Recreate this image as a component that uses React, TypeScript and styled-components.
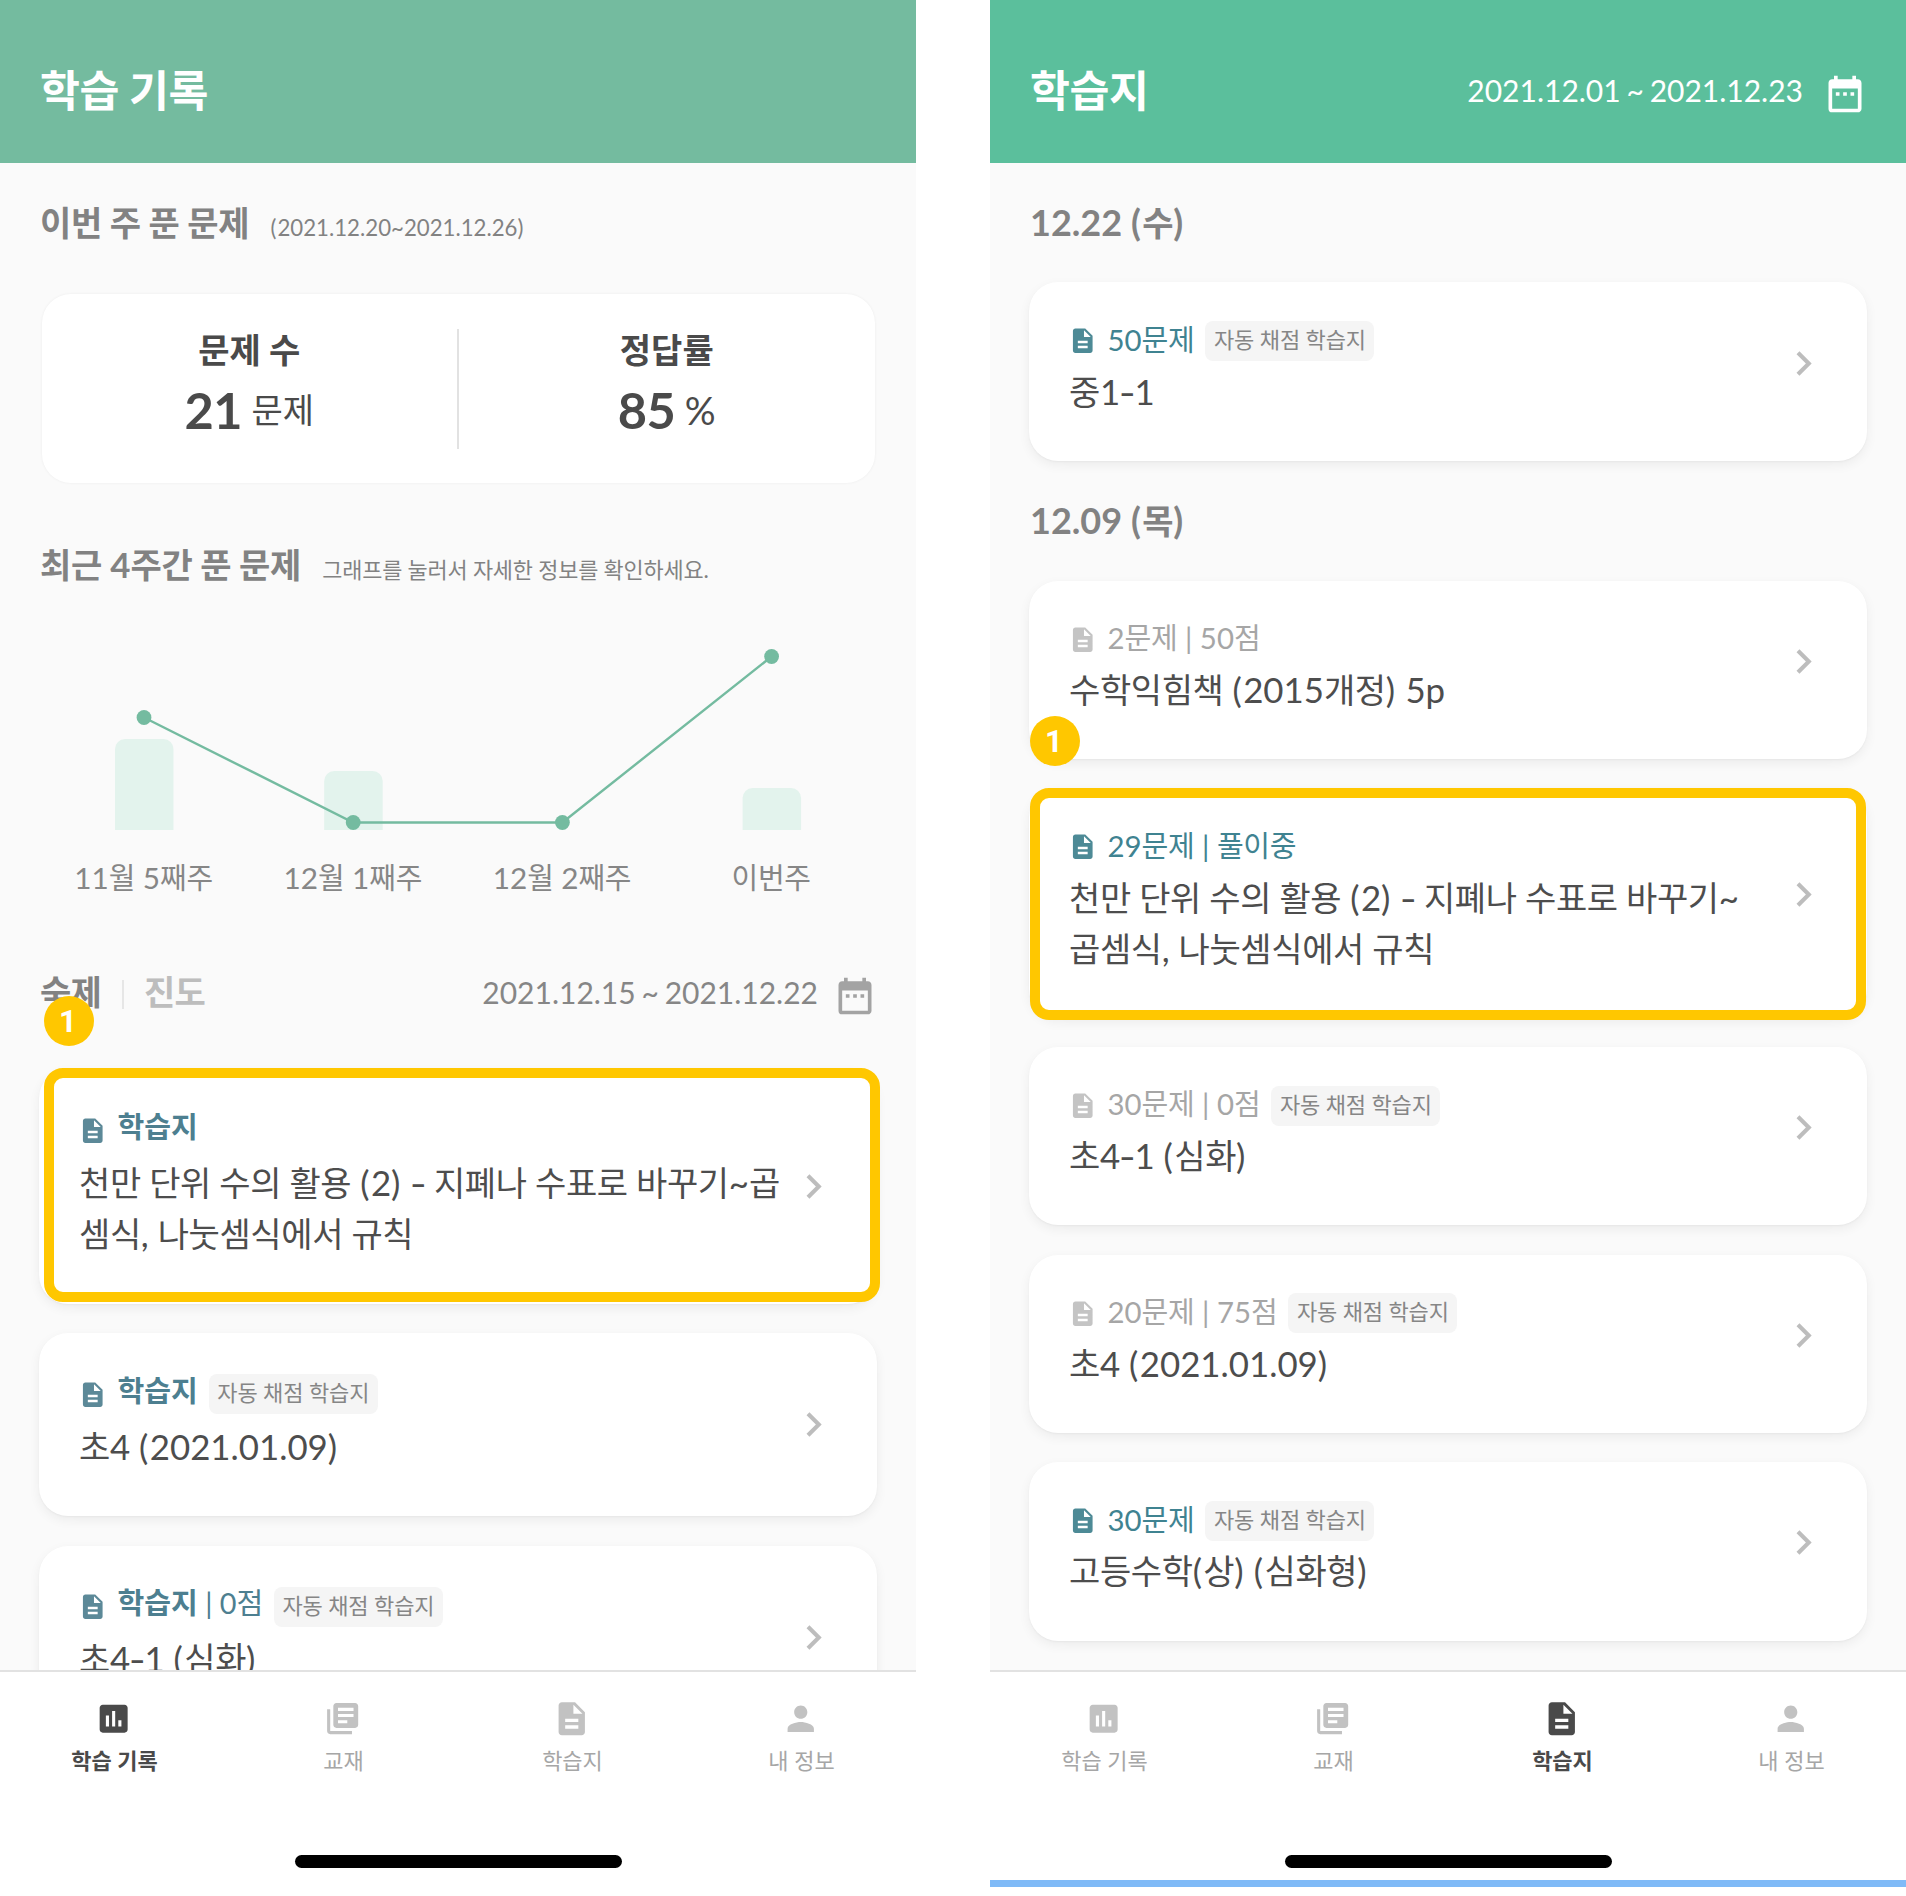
import React from 'react';
import styled, { createGlobalStyle } from 'styled-components';
import { MdDateRange, MdDescription, MdChevronRight, MdInsertChart, MdLibraryBooks, MdPerson } from 'react-icons/md';

const GlobalStyle = createGlobalStyle`
  *, *::before, *::after { box-sizing: border-box; }
  body { margin: 0; background: #fff; }
`;

const Page = styled.div`
  width: 1906px;
  height: 1896px;
  display: flex;
  justify-content: space-between;
  background: #fff;
  overflow: hidden;
  font-family: Lato, 'Noto Sans CJK KR', sans-serif;
`;

const Phone = styled.section`
  width: 916px;
  height: 1896px;
  display: flex;
  flex-direction: column;
  background: #fafafa;
`;

const Hangul = styled.span<{ $tight?: number }>`
  letter-spacing: ${(p) => -(p.$tight ?? 0.011)}em;
`;

const Latin = styled.span<{ $scale: number }>`
  font-size: ${(p) => p.$scale}em;
  font-kerning: none;
`;

const Paren = styled(Latin)`
  letter-spacing: 0.04em;
`;

const Hyphen = styled.span`
  display: inline-block;
  margin: 0 0.025em;
  transform: scaleX(1.35);
`;

/* Hangul is set slightly tighter and Latin slightly larger within one line. */
const Mixed = ({ text, scale = 1.025, tight }: { text: string; scale?: number; tight?: number }) => (
  <>
    {text.split(/([가-힣]+(?: [가-힣]+)*|-|[()])/).filter(Boolean).map((run, i) => {
      if (run === '-') return <Hyphen key={i}>-</Hyphen>;
      if (run === '(' || run === ')') return <Paren key={i} $scale={scale}>{run}</Paren>;
      if (/[가-힣]/.test(run)) return <Hangul key={i} $tight={tight}>{run}</Hangul>;
      return <Latin key={i} $scale={scale}>{run}</Latin>;
    })}
  </>
);

const Header = styled.header<{ $color: string }>`
  flex: none;
  height: 163px;
  padding: 16.5px 39.5px 0 40px;
  display: flex;
  align-items: center;
  justify-content: space-between;
  background: ${(p) => p.$color};
  color: #fff;
`;

const Title = styled.h1`
  margin: 0;
  font-size: 43.4px;
  line-height: 60px;
  font-weight: 700;
`;

const DateRange = styled.div<{ $color: string; $gap: number }>`
  display: flex;
  align-items: center;
  gap: ${(p) => p.$gap}px;
  color: ${(p) => p.$color};
  font-size: 30px;
  line-height: 44px;
  word-spacing: -1.9px;
  white-space: nowrap;
  svg { display: block; margin-top: 8px; }
`;

const Body = styled.main<{ $pad: number }>`
  flex: none;
  height: 1507px;
  overflow: hidden;
  padding: ${(p) => p.$pad}px 39px 0;
`;

const Heading = styled.div<{ $mt?: number; $mb: number }>`
  display: flex;
  align-items: baseline;
  gap: 21.5px;
  height: 50px;
  margin: ${(p) => p.$mt ?? 0}px 0 ${(p) => p.$mb}px 1px;
  white-space: nowrap;
  color: #828282;
`;

const HeadingText = styled.h2`
  margin: 0;
  font-size: 34px;
  line-height: 50px;
  font-weight: 700;
`;

const Hint = styled.span`
  font-size: 21.9px;
`;

const StatCard = styled.div`
  height: 189px;
  margin: 0 2.5px;
  padding: 35px 0 34px;
  display: flex;
  align-items: stretch;
  background: #fff;
  border-radius: 29px;
  box-shadow: 0 0 3px rgba(0, 0, 0, 0.06);
`;

const Stat = styled.div`
  flex: 1;
  display: flex;
  flex-direction: column;
  align-items: center;
  color: #4a4a4a;
  & + & { border-left: 2px solid #e2e2e2; }
`;

const StatLabel = styled.div`
  font-size: 34px;
  line-height: 42px;
  font-weight: 700;
`;

const StatValue = styled.div`
  display: flex;
  align-items: flex-start;
  gap: 9.5px;
  margin-top: 6px;
  line-height: 66px;
  strong { font-size: 50.5px; font-weight: 700; letter-spacing: -0.5px; }
`;

const Unit = styled.span<{ $size: number }>`
  font-size: ${(p) => p.$size}px;
  line-height: 66px;
`;

const Chart = styled.svg`
  display: block;
  width: 838px;
  height: 210px;
`;

const WeekLabels = styled.div`
  display: grid;
  grid-template-columns: repeat(4, 209.2px);
  margin-top: 5.5px;
  text-align: center;
  color: #868686;
  font-size: 29px;
  line-height: 44px;
`;

const FilterRow = styled.div`
  display: flex;
  justify-content: space-between;
  align-items: center;
  height: 50px;
  margin: 67.7px 0 52.3px 1px;
`;

const Tabs = styled.div`
  display: flex;
  align-items: center;
  position: relative;
`;

const Tab = styled.span<{ $active?: boolean }>`
  font-size: 34px;
  line-height: 50px;
  font-weight: 700;
  letter-spacing: -0.8px;
  color: ${(p) => (p.$active ? '#828282' : '#bdbdbd')};
`;

const TabDivider = styled.i`
  width: 2px;
  height: 29px;
  margin: 5px 20px 0 21px;
  background: #e6e6e6;
`;

const Cards = styled.div`
  display: flex;
  flex-direction: column;
  gap: 29.3px;
`;

const Card = styled.article<{ $h: number; $tail: number }>`
  position: relative;
  flex: none;
  height: ${(p) => p.$h}px;
  padding: 0 39px ${(p) => p.$tail}px 40px;
  display: flex;
  align-items: center;
  justify-content: space-between;
  background: #fff;
  border-radius: 29px;
  box-shadow: 0 4px 12px rgba(0, 0, 0, 0.06), 0 1px 2px rgba(0, 0, 0, 0.04);
  color: #bdbdbd;
`;

const CardText = styled.div`
  align-self: flex-start;
  min-width: 0;
`;

const Meta = styled.div<{ $color: string; $top: number }>`
  display: flex;
  align-items: center;
  height: 40px;
  margin-top: ${(p) => p.$top}px;
  color: ${(p) => p.$color};
  font-size: 29.1px;
  line-height: 40px;
  white-space: nowrap;
  svg { display: block; margin: 0.5px 10px 0 -1px; }
`;

const MetaText = styled.span<{ $lift: number }>`
  display: block;
  margin-top: ${(p) => -p.$lift}px;
  b { font-weight: 700; }
`;

const Chip = styled.span`
  height: 40px;
  margin-left: 11px;
  padding: 0 8.5px;
  border-radius: 8px;
  background: #f5f5f5;
  color: #868686;
  font-size: 22px;
  line-height: 37px;
`;

const CardTitle = styled.div<{ $top: number }>`
  margin-top: ${(p) => p.$top}px;
  font-size: 34px;
  line-height: 51.3px;
  color: #4d4d4d;
  white-space: nowrap;
`;

const Chevron = styled(MdChevronRight)`
  display: block;
  flex: none;
`;

const Frame = styled.div<{ $t: number; $r: number; $b: number; $l: number }>`
  position: absolute;
  inset: ${(p) => `${p.$t}px ${p.$r}px ${p.$b}px ${p.$l}px`};
  border: 10px solid #ffc700;
  border-radius: 19px;
`;

const Badge = styled.span<{ $x: number; $y: number }>`
  position: absolute;
  z-index: 2;
  left: ${(p) => p.$x}px;
  top: ${(p) => p.$y}px;
  width: 50px;
  height: 50px;
  padding-right: 2px;
  border-radius: 50%;
  background: #ffc700;
  color: #fff;
  font: 700 31px/51px Roboto, sans-serif;
  text-align: center;
`;

const TabBar = styled.nav`
  flex: 1;
  display: flex;
  flex-direction: column;
  align-items: center;
  border-top: 2.4px solid #e2e2e2;
  background: #fff;
`;

const TabItems = styled.div`
  width: 100%;
  height: 183px;
  padding-top: 27px;
  display: grid;
  grid-template-columns: repeat(4, 1fr);
  align-items: start;
`;

const TabItem = styled.div<{ $active: boolean }>`
  display: flex;
  flex-direction: column;
  align-items: center;
  color: ${(p) => (p.$active ? '#4a4a4a' : '#c2c2c2')};
  span {
    margin-top: 6px;
    font-size: 22px;
    line-height: 32px;
    font-weight: ${(p) => (p.$active ? 700 : 400)};
    color: ${(p) => (p.$active ? '#4a4a4a' : '#a6a6a6')};
  }
`;

const TabIcon = styled.div`
  height: 40px;
  margin-right: 1px;
  display: flex;
  align-items: center;
`;

const HomeIndicator = styled.div`
  width: 327px;
  height: 13px;
  border-radius: 7px;
  background: #000;
`;

const BlueLine = styled.div`
  width: 100%;
  height: 7px;
  margin: 12px 0 9px;
  background: #7fbaf7;
`;

const weeks = [
  { label: '11월 5째주', bar: 91, y: 77.5 },
  { label: '12월 1째주', bar: 59, y: 182.5 },
  { label: '12월 2째주', bar: 0, y: 182.5 },
  { label: '이번주', bar: 42, y: 16.5 },
];
const weekX = (i: number) => 105 + i * 209.2;

const WeekChart = () => (
  <Chart viewBox="0 0 838 210">
    {weeks.map((w, i) => {
      if (!w.bar) return null;
      const x = weekX(i) - 29;
      const top = 190 - w.bar;
      return (
        <path key={w.label} fill="#e3f3ed"
          d={`M${x} 190V${top + 10}a10 10 0 0 1 10 -10h38.5a10 10 0 0 1 10 10V190z`} />
      );
    })}
    <polyline fill="none" stroke="#74bba0" strokeWidth="2.4" points={weeks.map((w, i) => `${weekX(i)},${w.y}`).join(' ')} />
    {weeks.map((w, i) => <circle key={w.label} cx={weekX(i)} cy={w.y} r="7.4" fill="#74bba0" />)}
  </Chart>
);

const tabs = [
  { label: '학습 기록', Icon: MdInsertChart, size: 37.3 },
  { label: '교재', Icon: MdLibraryBooks, size: 37.3 },
  { label: '학습지', Icon: MdDescription, size: 39.5 },
  { label: '내 정보', Icon: MdPerson, size: 39.5 },
];

const BottomBar = ({ active, line }: { active: number; line?: boolean }) => (
  <TabBar>
    <TabItems>
      {tabs.map(({ label, Icon, size }, i) => (
        <TabItem key={label} $active={i === active}>
          <TabIcon><Icon size={size} /></TabIcon>
          <span>{label}</span>
        </TabItem>
      ))}
    </TabItems>
    <HomeIndicator />
    {line && <BlueLine />}
  </TabBar>
);

const AutoChip = () => <Chip><Hangul $tight={0.005}>자동 채점 학습지</Hangul></Chip>;

type SheetProps = {
  done?: boolean;
  meta: string;
  chip?: boolean;
  lines: string[];
  overlay?: React.ReactNode;
};

const Sheet = ({ done, meta, chip, lines, overlay }: SheetProps) => (
  <Card $h={lines.length > 1 ? 229.4 : 178.3} $tail={17}>
    <CardText>
      <Meta $color={done ? '#a6a6a6' : '#3f8391'} $top={38.5}>
        <MdDescription size={29.5} color={done ? '#c4c4c4' : '#4d8a96'} />
        <MetaText $lift={2.5}><Mixed text={meta} scale={1.01} /></MetaText>
        {chip && <AutoChip />}
      </Meta>
      <CardTitle $top={4.7}>{lines.map((l) => <div key={l}><Mixed text={l} /></div>)}</CardTitle>
    </CardText>
    <Chevron size={49} />
    {overlay}
  </Card>
);

type HomeworkProps = { score?: string; chip?: boolean; lines: string[]; overlay?: React.ReactNode };

const Homework = ({ score, chip, lines, overlay }: HomeworkProps) => (
  <Card $h={lines.length > 1 ? 234.5 : 183.2} $tail={0}>
    <CardText>
      <Meta $color="#4d7f90" $top={41}>
        <MdDescription size={29.5} color="#5c8998" />
        <MetaText $lift={7}><b>학습지</b>{score && <Mixed text={` | ${score}`} scale={0.99} />}</MetaText>
        {chip && <AutoChip />}
      </Meta>
      <CardTitle $top={6.5}>{lines.map((l) => <div key={l}><Mixed text={l} /></div>)}</CardTitle>
    </CardText>
    <Chevron size={49} />
    {overlay}
  </Card>
);

export default function App() {
  return (
    <>
      <GlobalStyle />
      <Page>
        <Phone>
          <Header $color="#74bb9f"><Title><Mixed text="학습 기록" /></Title></Header>
          <Body $pad={35}>
            <Heading $mb={46}>
              <HeadingText><Mixed text="이번 주 푼 문제" /></HeadingText>
              <Hint><Mixed text="(2021.12.20~2021.12.26)" scale={1.015} /></Hint>
            </Heading>
            <StatCard>
              <Stat>
                <StatLabel>문제 수</StatLabel>
                <StatValue><strong>21</strong><Unit $size={34}>문제</Unit></StatValue>
              </Stat>
              <Stat>
                <StatLabel>정답률</StatLabel>
                <StatValue><strong>85</strong><Unit $size={38.5}>%</Unit></StatValue>
              </Stat>
            </StatCard>
            <Heading $mt={56.5} $mb={50.5}>
              <HeadingText><Mixed text="최근 4주간 푼 문제" /></HeadingText>
              <Hint><Mixed text="그래프를 눌러서 자세한 정보를 확인하세요." tight={0.008} /></Hint>
            </Heading>
            <WeekChart />
            <WeekLabels>{weeks.map((w) => <span key={w.label}><Mixed text={w.label} /></span>)}</WeekLabels>
            <FilterRow>
              <Tabs>
                <Tab $active>숙제</Tab>
                <TabDivider />
                <Tab>진도</Tab>
                <Badge $x={4} $y={28.5}>1</Badge>
              </Tabs>
              <DateRange $color="#868686" $gap={15}>
                2021.12.15 ~ 2021.12.22
                <MdDateRange size={44} color="#a3a3a3" />
              </DateRange>
            </FilterRow>
            <Cards>
              <Homework
                lines={['천만 단위 수의 활용 (2) - 지폐나 수표로 바꾸기~곱', '셈식, 나눗셈식에서 규칙']}
                overlay={<Frame $t={-1.5} $r={-3} $b={1.5} $l={5} />}
              />
              <Homework chip lines={['초4 (2021.01.09)']} />
              <Homework chip score="0점" lines={['초4-1 (심화)']} />
            </Cards>
          </Body>
          <BottomBar active={0} />
        </Phone>
        <Phone>
          <Header $color="#5bbf9c">
            <Title><Mixed text="학습지" /></Title>
            <DateRange $color="#fff" $gap={19.5}>
              2021.12.01 ~ 2021.12.23
              <MdDateRange size={44} />
            </DateRange>
          </Header>
          <Body $pad={34}>
            <Heading $mb={35.4}><HeadingText><Mixed text="12.22 (수)" scale={1.06} /></HeadingText></Heading>
            <Cards>
              <Sheet meta="50문제" chip lines={['중1-1']} />
            </Cards>
            <Heading $mt={34.6} $mb={35.5}><HeadingText><Mixed text="12.09 (목)" scale={1.06} /></HeadingText></Heading>
            <Cards>
              <Sheet done meta="2문제 | 50점" lines={['수학익힘책 (2015개정) 5p']} overlay={<Badge $x={1} $y={135.5}>1</Badge>} />
              <Sheet
                meta="29문제 | 풀이중"
                lines={['천만 단위 수의 활용 (2) - 지폐나 수표로 바꾸기~', '곱셈식, 나눗셈식에서 규칙']}
                overlay={<Frame $t={-0.5} $r={1} $b={-2} $l={1} />}
              />
              <Sheet done meta="30문제 | 0점" chip lines={['초4-1 (심화)']} />
              <Sheet done meta="20문제 | 75점" chip lines={['초4 (2021.01.09)']} />
              <Sheet meta="30문제" chip lines={['고등수학(상) (심화형)']} />
            </Cards>
          </Body>
          <BottomBar active={2} line />
        </Phone>
      </Page>
    </>
  );
}
